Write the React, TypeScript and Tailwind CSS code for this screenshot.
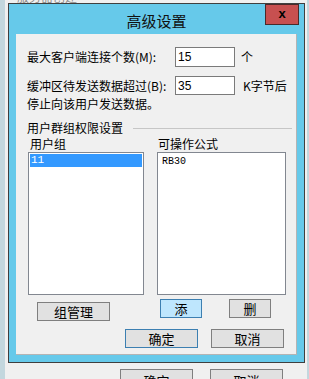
const FONT = '"Noto Sans CJK SC", "Noto Sans", sans-serif';

const Btn = ({ label, w, variant = 'normal' }: { label: string; w: string; variant?: 'normal' | 'default' | 'hot' }) => {
  const cls =
    variant === 'hot'
      ? 'bg-[#bee6fd] border-[#3c7fb1]'
      : variant === 'default'
        ? 'bg-[#e1e1e1] border-[#3c7fb1]'
        : 'bg-[#e1e1e1] border-[#7f7f7f]';
  return (
    <div className={`${w} h-[19px] border ${cls} flex items-center justify-center text-[13px] leading-none text-black`}>
      {label}
    </div>
  );
};

export default function App() {
  return (
    <div className="relative w-[309px] h-[379px] overflow-hidden bg-[#f0f0f0] flex" style={{ fontFamily: FONT }}>
      <div className="w-[5px] h-full bg-[#c3d7de]" />
      <div className="flex-1 flex flex-col">
        <div className="h-[3px] overflow-hidden relative">
          <span className="absolute left-[12px] top-[-10px] text-[12px] leading-[14px] text-[#8a8a8a]">服务器创建</span>
        </div>
        <div className="flex-1" />
        <div className="flex gap-[17px] pl-[115px] mb-[-12px]">
          <Btn label="确定" w="w-[73px] !h-[22px]" />
          <Btn label="取消" w="w-[73px] !h-[22px]" />
        </div>
      </div>
      <div className="w-[2px] h-full bg-[#c3d7de]" />

      {/* dialog window */}
      <div className="absolute left-[8px] top-[3px] w-[297px] h-[360px] border border-[#3f3f3f] bg-[#66c9ea] flex flex-col">
        <div className="relative h-[30px] flex items-center justify-center">
          <span className="text-[15px] leading-none text-[#111] mt-[3px]">高级设置</span>
          <div className="absolute right-[5px] top-0 w-[34px] h-[21px] bg-[#c75050] border border-[#4a2a2a] flex items-center justify-center">
            <span className="text-[13px] font-bold leading-none text-black mt-[-2px]" style={{ fontFamily: '"Liberation Sans", sans-serif' }}>x</span>
          </div>
        </div>

        <div className="mx-[7px] mb-[7px] flex-1 bg-[#f0f0f0] border-b border-r border-[#b4b4b4] flex flex-col pl-[11px] text-[12px] text-black">
          <div className="mt-[13px] flex items-center h-[20px]">
            <span className="w-[148px] leading-[14px]">最大客户端连接个数(M):</span>
            <div className="w-[60px] h-[20px] bg-white border border-[#7a7a7a] flex items-center pl-[2px]">
              <span style={{ fontFamily: '"Liberation Sans", sans-serif' }}>15</span>
            </div>
            <span className="ml-[6px] leading-[14px]">个</span>
          </div>
          <div className="mt-[9px] flex items-center h-[19px]">
            <span className="w-[148px] leading-[14px]">缓冲区待发送数据超过(B):</span>
            <div className="w-[60px] h-[19px] bg-white border border-[#7a7a7a] flex items-center pl-[2px]">
              <span style={{ fontFamily: '"Liberation Sans", sans-serif' }}>35</span>
            </div>
            <span className="ml-[8px] leading-[14px]">K字节后</span>
          </div>
          <div className="mt-[2px] leading-[14px]">停止向该用户发送数据。</div>

          <div className="mt-[10px] flex items-center gap-[10px] h-[14px] pr-[4px]">
            <span className="leading-[12px]">用户群组权限设置</span>
            <div className="flex-1 h-px bg-[#c6c6c6]" />
          </div>
          <div className="mt-[2px] flex items-center h-[13px] leading-[12px]">
            <span className="ml-[3px] w-[128px]">用户组</span>
            <span>可操作公式</span>
          </div>

          <div className="mt-[2px] flex">
            <div className="ml-[1px] w-[116px] h-[143px] bg-white border border-[#828790] p-px">
              <div className="h-[13px] bg-[#3399ff] text-white text-[11px] leading-[13px] pl-[1px]" style={{ fontFamily: '"Liberation Mono", monospace' }}>
                11
              </div>
            </div>
            <div className="ml-[13px] w-[129px] h-[143px] bg-white border border-[#828790] p-px">
              <div className="h-[13px] text-[10px] leading-[13px] pl-[3px] pt-[1px]" style={{ fontFamily: '"Liberation Mono", monospace' }}>
                RB30
              </div>
            </div>
          </div>

          <div className="mt-[4px] flex items-start">
            <div className="ml-[10px] mt-[3px]">
              <Btn label="组管理" w="w-[73px]" />
            </div>
            <div className="ml-[50px]">
              <Btn label="添" w="w-[42px]" variant="hot" />
            </div>
            <div className="ml-[27px]">
              <Btn label="删" w="w-[42px]" />
            </div>
          </div>

          <div className="mt-[8px] flex">
            <div className="ml-[98px]">
              <Btn label="确定" w="w-[73px]" variant="default" />
            </div>
            <div className="ml-[13px]">
              <Btn label="取消" w="w-[73px]" />
            </div>
          </div>
        </div>
      </div>
    </div>
  );
}
